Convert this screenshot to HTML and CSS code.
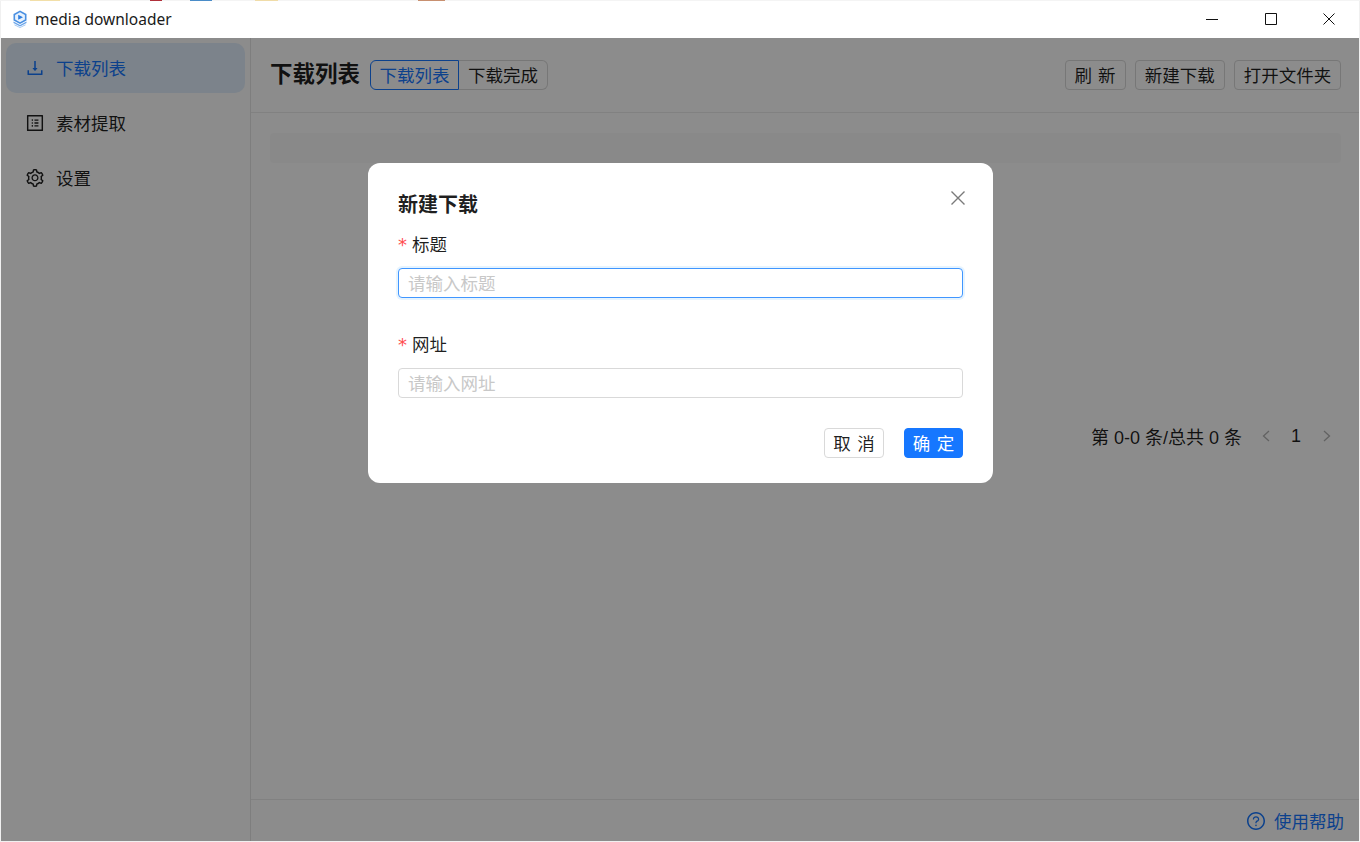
FILE: index.html
```html
<!DOCTYPE html>
<html lang="zh-CN">
<head>
<meta charset="utf-8">
<title>media downloader</title>
<link rel="stylesheet" href="styles.css">
</head>
<body>
<div class="desktop-strip"></div>
<div class="window">
  <header class="titlebar">
    <div class="app-name">
      <svg class="app-logo" viewBox="0 0 16 18" aria-hidden="true">
        <path d="M8 0.500 14.500 4v6.500L8 14 1.500 10.500V4z" fill="#4a90e2"/>
        <path d="M8 2.300 12.900 5v4.500L8 12.200 3.100 9.500V5z" fill="#e8f2fd"/>
        <path d="M6.200 4.800 11 7.300 6.200 9.800z" fill="#2f7fe0"/>
        <path d="M1.500 11.500 8 15l6.500-3.500v1.600L8 16.600 1.500 13.100z" fill="#6ba6ea"/>
        <path d="M2.500 14.200 8 17.200l5.500-3v1L8 18l-5.500-2.800z" fill="#9cc4f2"/>
      </svg>
      <span>media downloader</span>
    </div>
    <div class="win-controls">
      <svg class="win-icon" viewBox="0 0 12 12"><path d="M0 6.500h12" /></svg>
      <svg class="win-icon" viewBox="0 0 12 12"><path d="M.5.500h11v11H.5z" /></svg>
      <svg class="win-icon" viewBox="0 0 12 12"><path d="M.5.500l11 11M11.500.500l-11 11" /></svg>
    </div>
  </header>
  <div class="app-body">
    <aside class="sidebar">
      <a class="menu-item active">
        <svg class="icon" viewBox="64 64 896 896"><path d="M505.700 661a8 8 0 0012.600 0l112-141.700c4.100-5.200.4-12.900-6.300-12.900h-74.100V168c0-4.400-3.600-8-8-8h-60c-4.400 0-8 3.600-8 8v338.300H400c-6.700 0-10.400 7.700-6.300 12.900l112 141.800zM878 626h-60c-4.400 0-8 3.600-8 8v154H214V634c0-4.400-3.600-8-8-8h-60c-4.400 0-8 3.600-8 8v198c0 17.700 14.300 32 32 32h684c17.700 0 32-14.300 32-32V634c0-4.400-3.600-8-8-8z"/></svg>
        <span>下载列表</span>
      </a>
      <a class="menu-item">
        <svg class="icon" viewBox="64 64 896 896"><path d="M880 112H144c-17.700 0-32 14.300-32 32v736c0 17.700 14.300 32 32 32h736c17.700 0 32-14.300 32-32V144c0-17.700-14.300-32-32-32zm-40 728H184V184h656v656zM492 400h184c4.400 0 8-3.600 8-8v-48c0-4.400-3.600-8-8-8H492c-4.400 0-8 3.600-8 8v48c0 4.400 3.600 8 8 8zm0 144h184c4.400 0 8-3.600 8-8v-48c0-4.400-3.600-8-8-8H492c-4.400 0-8 3.600-8 8v48c0 4.400 3.600 8 8 8zm0 144h184c4.400 0 8-3.600 8-8v-48c0-4.400-3.600-8-8-8H492c-4.400 0-8 3.600-8 8v48c0 4.400 3.600 8 8 8zM340 368a40 40 0 1080 0 40 40 0 10-80 0zm0 144a40 40 0 1080 0 40 40 0 10-80 0zm0 144a40 40 0 1080 0 40 40 0 10-80 0z"/></svg>
        <span>素材提取</span>
      </a>
      <a class="menu-item">
        <svg class="icon" viewBox="64 64 896 896"><path d="M924.800 625.700l-65.500-56c3.100-19 4.700-38.400 4.700-57.800s-1.600-38.800-4.700-57.800l65.500-56a32.030 32.030 0 009.300-35.200l-.9-2.600a443.740 443.740 0 00-79.700-137.900l-1.800-2.100a32.120 32.120 0 00-35.100-9.500l-81.300 28.900c-30-24.600-63.500-44-99.700-57.600l-15.700-85a32.050 32.050 0 00-25.800-25.700l-2.700-.5c-52.100-9.400-106.900-9.400-159 0l-2.700.5a32.050 32.050 0 00-25.800 25.700l-15.800 85.400a351.860 351.860 0 00-99 57.400l-81.900-29.100a32 32 0 00-35.100 9.500l-1.800 2.100a446.020 446.020 0 00-79.700 137.900l-.9 2.600c-4.500 12.500-.8 26.500 9.300 35.200l66.300 56.600c-3.100 18.800-4.600 38-4.600 57.100 0 19.200 1.500 38.400 4.600 57.100L99 625.500a32.030 32.030 0 00-9.300 35.200l.9 2.600c18.100 50.400 44.900 96.900 79.700 137.900l1.800 2.100a32.120 32.120 0 0035.100 9.500l81.900-29.100c29.800 24.500 63.100 43.900 99 57.400l15.800 85.400a32.050 32.050 0 0025.800 25.700l2.700.5a449.400 449.400 0 00159 0l2.700-.5a32.050 32.050 0 0025.800-25.700l15.700-85a350 350 0 0099.700-57.600l81.300 28.900a32 32 0 0035.100-9.500l1.800-2.100c34.800-41.100 61.600-87.500 79.700-137.900l.9-2.600c4.500-12.300.8-26.300-9.300-35zM788.300 465.900c2.500 15.100 3.800 30.600 3.800 46.100s-1.300 31-3.800 46.100l-6.600 40.100 74.700 63.900a370.030 370.030 0 01-42.600 73.600L721 702.800l-31.400 25.800c-23.900 19.600-50.500 35-79.300 45.800l-38.100 14.300-17.900 97a377.500 377.500 0 01-85 0l-17.900-97.200-37.800-14.500c-28.500-10.800-55-26.200-78.700-45.700l-31.400-25.900-93.400 33.200c-17-22.900-31.200-47.600-42.600-73.600l75.500-64.500-6.500-40c-2.400-14.900-3.700-30.300-3.700-45.500 0-15.300 1.200-30.600 3.700-45.500l6.500-40-75.500-64.500c11.300-26.100 25.600-50.700 42.600-73.600l93.400 33.200 31.400-25.900c23.700-19.500 50.200-34.900 78.700-45.700l37.900-14.300 17.900-97.200c28.100-3.200 56.800-3.200 85 0l17.900 97 38.100 14.300c28.700 10.800 55.400 26.200 79.300 45.800l31.400 25.800 92.800-32.900c17 22.900 31.200 47.600 42.600 73.600L781.800 426l6.500 39.900zM512 326c-97.200 0-176 78.800-176 176s78.800 176 176 176 176-78.800 176-176-78.800-176-176-176zm79.200 255.200A111.600 111.600 0 01512 614c-29.900 0-58-11.700-79.200-32.800A111.600 111.600 0 01400 502c0-29.900 11.700-58 32.800-79.200C454 401.600 482.100 390 512 390c29.900 0 58 11.600 79.200 32.800A111.600 111.600 0 01624 502c0 29.900-11.700 58-32.800 79.200z"/></svg>
        <span>设置</span>
      </a>
    </aside>
    <main class="main">
      <div class="page-header">
        <div class="header-left">
          <h1 class="page-title">下载列表</h1>
          <div class="tabs">
            <span class="tab selected">下载列表</span>
            <span class="tab">下载完成</span>
          </div>
        </div>
        <div class="header-actions">
          <button class="btn btn-two">刷 新</button>
          <button class="btn">新建下载</button>
          <button class="btn">打开文件夹</button>
        </div>
      </div>
      <div class="content">
        <div class="table-head"></div>
        <div class="table-body"></div>
        <div class="pagination">
          <span class="total">第 0-0 条/总共 0 条</span>
          <svg class="page-arrow" viewBox="0 0 10 14"><path d="M8 2 2.500 7 8 12"/></svg>
          <span class="page-num">1</span>
          <svg class="page-arrow" viewBox="0 0 10 14"><path d="M2 2l5.500 5L2 12"/></svg>
        </div>
      </div>
      <div class="page-footer">
        <a class="help">
          <svg class="icon" viewBox="64 64 896 896"><path d="M512 64C264.600 64 64 264.600 64 512s200.600 448 448 448 448-200.600 448-448S759.400 64 512 64zm0 820c-205.400 0-372-166.600-372-372s166.600-372 372-372 372 166.600 372 372-166.600 372-372 372z"/><path d="M623.600 316.700C593.600 290.400 554 276 512 276s-81.600 14.500-111.600 40.700C369.200 344 352 380.700 352 420v7.600c0 4.400 3.600 8 8 8h48c4.400 0 8-3.600 8-8V420c0-44.100 43.100-80 96-80s96 35.900 96 80c0 31.100-22 59.600-56.100 72.700-21.200 8.100-39.200 22.300-52.100 40.900-13.100 19-19.900 41.800-19.900 64.900V620c0 4.400 3.600 8 8 8h48c4.400 0 8-3.600 8-8v-22.700a48.300 48.300 0 0130.900-44.800c59-22.700 97.100-74.700 97.100-132.500.1-39.300-17.100-76-48.300-103.300zM472 732a40 40 0 1080 0 40 40 0 10-80 0z"/></svg>
          <span>使用帮助</span>
        </a>
      </div>
    </main>
    <div class="overlay">
      <section class="modal">
        <svg class="modal-close" viewBox="0 0 14 14"><path d="M.5.500l13 13M13.500.500l-13 13"/></svg>
        <h2 class="modal-title">新建下载</h2>
        <div class="field">
          <label class="field-label"><span class="req">*</span>标题</label>
          <input class="input focused" placeholder="请输入标题">
        </div>
        <div class="field">
          <label class="field-label"><span class="req">*</span>网址</label>
          <input class="input" placeholder="请输入网址">
        </div>
        <div class="modal-footer">
          <button class="btn btn-plain">取 消</button>
          <button class="btn btn-primary">确 定</button>
        </div>
      </section>
    </div>
  </div>
</div>
</body>
</html>
```
FILE: styles.css
```css
* { box-sizing: border-box; }
html, body { margin: 0; padding: 0; height: 100%; overflow: hidden; }
body {
  background: #f0f0f0;
  font-family: "Liberation Sans", "Noto Sans CJK SC", sans-serif;
  font-size: 17.500px;
  color: rgba(0, 0, 0, 0.88);
  display: flex;
  flex-direction: column;
}
.desktop-strip {
  height: 1px;
  flex: none;
  background: linear-gradient(90deg,
    #f4f4f4 0 30px, #f2dfa8 30px 60px, #f4f4f4 60px 150px, #b0303a 150px 162px,
    #f4f4f4 162px 190px, #4a8cc8 190px 212px, #f4f4f4 212px 255px, #f0dca8 255px 278px,
    #f4f4f4 278px 418px, #c89070 418px 445px, #f4f4f4 445px 100%);
}
.window {
  flex: 1;
  min-height: 0;
  margin: 0 1px 1px 1px;
  display: flex;
  flex-direction: column;
  background: #fff;
}
.titlebar {
  height: 37px;
  flex: none;
  display: flex;
  align-items: center;
  justify-content: space-between;
  padding-bottom: 2px;
  background: #fff;
}
.app-name {
  display: flex;
  align-items: center;
  gap: 7px;
  padding-left: 11px;
  font-family: "Noto Sans", sans-serif;
  font-size: 15.500px;
  color: #1a1a1a;
}
.app-logo { width: 16px; height: 18px; }
.win-controls {
  display: flex;
  align-items: center;
  gap: 46.500px;
  padding-right: 24px;
}
.win-icon {
  width: 12px;
  height: 12px;
  fill: none;
  stroke: #111;
  stroke-width: 1;
}
.app-body {
  flex: 1;
  min-height: 0;
  display: flex;
  position: relative;
}
.sidebar {
  width: 250px;
  flex: none;
  border-right: 1px solid #e6e6e6;
  padding: 5px 5px 0 5px;
  display: flex;
  flex-direction: column;
  gap: 5px;
}
.menu-item {
  height: 50px;
  border-radius: 10px;
  display: flex;
  align-items: center;
  gap: 12px;
  padding-left: 20px;
  color: rgba(0, 0, 0, 0.88);
}
.menu-item span { margin-top: -2px; }
.menu-item.active {
  background: #e2effd;
  color: #1677ff;
}
.icon {
  width: 18px;
  height: 18px;
  fill: currentColor;
  flex: none;
}
.main {
  flex: 1;
  min-width: 0;
  display: flex;
  flex-direction: column;
}
.page-header {
  height: 75px;
  flex: none;
  border-bottom: 1px solid #ececec;
  display: flex;
  align-items: center;
  justify-content: space-between;
  padding: 0 18px 0 19px;
}
.header-left {
  display: flex;
  align-items: center;
  gap: 10px;
}
.page-title {
  margin: 0;
  font-size: 22.500px;
  font-weight: 700;
  line-height: 30px;
}
.tabs { display: flex; }
.tab {
  height: 30px;
  width: 89px;
  padding-bottom: 2px;
  display: flex;
  align-items: center;
  justify-content: center;
  border: 1px solid #d9d9d9;
  border-left: none;
}
.tab:first-child { border-radius: 6px 0 0 6px; }
.tab:last-child { border-radius: 0 6px 6px 0; }
.tab.selected {
  border: 1px solid #1677ff;
  color: #1677ff;
}
.header-actions {
  display: flex;
  gap: 9.500px;
}
.btn {
  height: 30px;
  padding: 0 8.750px 2px;
  border: 1px solid #d9d9d9;
  border-radius: 4px;
  background: #fff;
  color: rgba(0, 0, 0, 0.88);
  font: inherit;
  display: flex;
  align-items: center;
  justify-content: center;
}
.btn-two {
  width: 61px;
  padding: 0 0 2px;
  word-spacing: 1px;
}
.content {
  flex: 1;
  min-height: 0;
  padding: 20px 18px 0 19px;
  display: flex;
  flex-direction: column;
}
.table-head {
  height: 30px;
  flex: none;
  background: #fafafa;
  border-radius: 4px;
}
.table-body {
  height: 258px;
  flex: none;
}
.pagination {
  display: flex;
  align-items: center;
  justify-content: flex-end;
  height: 30px;
  padding-right: 9px;
  font-size: 18px;
}
.total { margin-right: 19px; margin-top: -1px; }
.page-arrow {
  width: 10px;
  height: 14px;
  fill: none;
  stroke: rgba(0, 0, 0, 0.3);
  stroke-width: 1.300;
}
.page-num {
  width: 50px;
  margin-right: 1px;
  text-align: center;
}
.page-footer {
  height: 42px;
  flex: none;
  border-top: 1px solid #ececec;
  display: flex;
  align-items: center;
  justify-content: flex-end;
  padding-right: 15px;
}
.help {
  display: flex;
  align-items: center;
  gap: 9px;
  color: #1677ff;
}
.overlay {
  position: absolute;
  inset: 0;
  background: rgba(0, 0, 0, 0.45);
  display: flex;
  justify-content: center;
  align-items: flex-start;
  padding-top: 125px;
}
.modal {
  position: relative;
  width: 625px;
  height: 320px;
  margin-left: 1px;
  background: #fff;
  border-radius: 12px;
  padding: 27px 30px 25px;
  display: flex;
  flex-direction: column;
}
.modal-close {
  position: absolute;
  top: 28px;
  right: 28px;
  width: 14px;
  height: 14px;
  fill: none;
  stroke: #7a7a7a;
  stroke-width: 1.400;
}
.modal-title {
  margin: 0 0 10px;
  font-size: 20px;
  font-weight: 700;
  line-height: 30px;
}
.field {
  display: flex;
  flex-direction: column;
  gap: 12px;
  flex: none;
  height: 100px;
}
.field + .field { height: auto; }
.field-label {
  display: flex;
  align-items: center;
  height: 26px;
  color: rgba(0, 0, 0, 0.88);
}
.req {
  color: #ff4d4f;
  font-family: "DejaVu Sans", sans-serif;
  font-size: 18px;
  line-height: 18px;
  padding-top: 4px;
  width: 14px;
  flex: none;
}
.input {
  height: 30px;
  width: 100%;
  border: 1px solid #d9d9d9;
  border-radius: 4px;
  padding: 2px 9px 0;
  font: inherit;
  color: rgba(0, 0, 0, 0.88);
  background: #fff;
  outline: none;
}
.input::placeholder { color: #c8c8c8; }
.input.focused {
  border-color: #4096ff;
  box-shadow: 0 0 0 2px rgba(5, 145, 255, 0.1);
}
.modal-footer {
  margin-top: auto;
  display: flex;
  justify-content: flex-end;
  gap: 20px;
}
.btn-plain { width: 60px; padding: 0 0 2px; word-spacing: 1.500px; }
.btn-primary {
  width: 59px;
  padding: 0 0 2px;
  word-spacing: 1.500px;
  background: #1677ff;
  border-color: #1677ff;
  color: #fff;
}
```
